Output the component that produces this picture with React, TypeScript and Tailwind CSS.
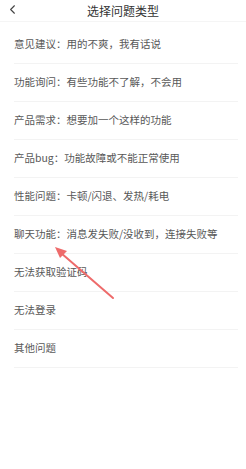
import { ChevronLeft } from 'lucide-react';

const ITEMS = [
  '意见建议：用的不爽，我有话说',
  '功能询问：有些功能不了解，不会用',
  '产品需求：想要加一个这样的功能',
  '产品bug：功能故障或不能正常使用',
  '性能问题：卡顿/闪退、发热/耗电',
  '聊天功能：消息发失败/没收到，连接失败等',
  '无法获取验证码',
  '无法登录',
  '其他问题',
];

export default function App() {
  return (
    <div
      className="relative w-[246px] h-[469px] bg-white overflow-hidden"
      style={{ fontFamily: '"Noto Sans CJK SC", "Noto Sans", sans-serif' }}
    >
      {/* Header */}
      <div className="relative h-[22px] flex items-center justify-center border-b border-[#f5f5f5]">
        <ChevronLeft className="absolute left-[5px] top-[2px] w-[15px] h-[15px] text-[#444]" strokeWidth={1.75} />
        <span className="text-[12px] text-[#333]">选择问题类型</span>
      </div>

      {/* List */}
      <div className="pt-[4px]">
        {ITEMS.map(label => (
          <div key={label} className="ml-[14px] mr-[8px] h-[38px] flex items-center border-b border-[#f3f3f3]">
            <span className="text-[10.5px] text-[#585858] leading-none whitespace-nowrap">{label}</span>
          </div>
        ))}
      </div>

      {/* Annotation arrow */}
      <svg className="absolute left-0 top-0 pointer-events-none" width="246" height="469">
        <line x1="113" y1="298" x2="61" y2="253" stroke="#ee6b6b" strokeWidth="2" strokeLinecap="round" />
        <polygon points="55,247 67,251 60,258" fill="#ee6b6b" />
      </svg>
    </div>
  );
}
